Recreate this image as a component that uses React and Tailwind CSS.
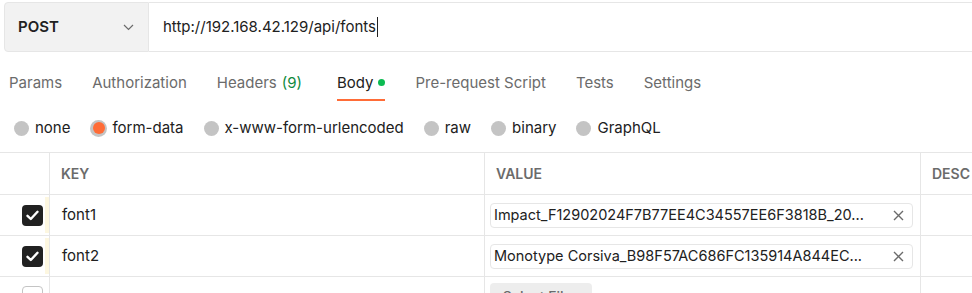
import React from 'react'

const tabs = [
  { label: 'Params' },
  { label: 'Authorization' },
  { label: 'Headers', count: '(9)' },
  { label: 'Body', active: true },
  { label: 'Pre-request Script' },
  { label: 'Tests' },
  { label: 'Settings' },
]

const bodyTypes = ['none', 'form-data', 'x-www-form-urlencoded', 'raw', 'binary', 'GraphQL']

const rows = [
  { key: 'font1', value: 'Impact_F12902024F7B77EE4C34557EE6F3818B_20...' },
  { key: 'font2', value: 'Monotype Corsiva_B98F57AC686FC135914A844EC...' },
]

function Check() {
  return (
    <div className="flex h-[21px] w-[21px] items-center justify-center rounded-[4px] bg-[#212121]">
      <svg width="13" height="11" viewBox="0 0 13 11" fill="none">
        <path d="M1.5 5.8 L4.8 9 L11.5 1.8" stroke="white" strokeWidth="2.4" strokeLinecap="round" strokeLinejoin="round" />
      </svg>
    </div>
  )
}

function Cross() {
  return (
    <svg width="11" height="11" viewBox="0 0 11 11" fill="none">
      <path d="M1 1 L10 10 M10 1 L1 10" stroke="#6b6b6b" strokeWidth="1.4" />
    </svg>
  )
}

export default function App() {
  return (
    <div className="h-[293px] w-[972px] overflow-hidden bg-white font-['Inter',sans-serif] text-[#212121]">
      {/* request bar */}
      <div className="flex h-[52px] pl-[4px] pt-[2px]">
        <div className="flex w-[145px] items-center justify-between rounded-l-[4px] border border-[#e6e6e6] bg-[#f2f2f2] pl-[13px] pr-[14px]">
          <span className="text-[15px] font-semibold">POST</span>
          <svg width="11" height="7" viewBox="0 0 11 7" fill="none">
            <path d="M1 1 L5.5 5.5 L10 1" stroke="#6b6b6b" strokeWidth="1.2" />
          </svg>
        </div>
        <div className="flex flex-1 items-center border-y border-[#e6e6e6] pl-[14px]">
          <span className="text-[15px]">http://192.168.42.129/api/fonts</span>
          <span className="ml-px h-[20px] w-px bg-[#212121]" />
        </div>
      </div>

      {/* tabs */}
      <div className="flex h-[49px] items-end gap-[30px] pl-[9px]">
        {tabs.map((t) => (
          <div
            key={t.label}
            className={`flex items-center border-b-2 pb-[6px] text-[15px] leading-[21px] ${
              t.active ? 'border-[#ff6c37] text-[#212121]' : 'border-transparent text-[#6b6b6b]'
            } ${t.count ? 'mr-[5px]' : ''}`}
          >
            {t.label}
            {t.count && <span className="ml-[5px] text-[#0f8a3d]">{t.count}</span>}
            {t.active && <span className="ml-[5px] h-[7px] w-[7px] rounded-full bg-[#0cbb52]" />}
          </div>
        ))}
      </div>

      {/* body types */}
      <div className="flex h-[51px] items-center gap-[20px] pl-[14px] pt-[3px]">
        {bodyTypes.map((b) =>
          b === 'form-data' ? (
            <div key={b} className="flex items-center gap-[5px] text-[15px]">
              <span className="flex h-[17px] w-[17px] items-center justify-center rounded-full bg-[#c4c4c4]">
                <span className="h-[12px] w-[12px] rounded-full bg-[#ff6c37]" />
              </span>
              {b}
            </div>
          ) : (
            <div key={b} className="flex items-center gap-[6px] text-[15px]">
              <span className="h-[15px] w-[15px] rounded-full bg-[#c4c4c4]" />
              {b}
            </div>
          )
        )}
      </div>

      {/* table */}
      <div className="border-t border-[#e6e6e6]">
        <div className="grid h-[42px] grid-cols-[50px_435px_436px_1fr] border-b border-[#e6e6e6] text-[14px] font-semibold text-[#6b6b6b]">
          <div className="border-r border-[#e6e6e6]" />
          <div className="flex items-center border-r border-[#e6e6e6] pl-[11px]">KEY</div>
          <div className="flex items-center border-r border-[#e6e6e6] pl-[11px]">VALUE</div>
          <div className="flex items-center pl-[11px]">DESC</div>
        </div>
        {rows.map((r) => (
          <div key={r.key} className="grid h-[41px] grid-cols-[50px_435px_436px_1fr] border-b border-[#e6e6e6] text-[15px]">
            <div className="flex items-center border-r border-[#e6e6e6] pl-[22px]">
              <Check />
              <span className="ml-[2px] h-[36px] w-[4px] bg-[#fdf7e0]" />
            </div>
            <div className="flex items-center border-r border-[#e6e6e6] pl-[12px]">{r.key}</div>
            <div className="flex items-center border-r border-[#e6e6e6] pl-[5px] pr-[7px]">
              <div className="flex h-[25px] flex-1 items-center justify-between rounded-[4px] border border-[#e6e6e6] pl-[3px] pr-[8px] text-[14.5px]">
                <span>{r.value}</span>
                <Cross />
              </div>
            </div>
            <div />
          </div>
        ))}
        <div className="grid h-[41px] grid-cols-[50px_435px_436px_1fr]">
          <div className="border-r border-[#e6e6e6] pl-[22px] pt-[9px]">
            <div className="h-[21px] w-[21px] rounded-[4px] border border-[#c4c4c4]" />
          </div>
          <div className="border-r border-[#e6e6e6]" />
          <div className="border-r border-[#e6e6e6] pl-[5px] pt-[6px]">
            <div className="flex h-[26px] w-[102px] items-start justify-center rounded-[4px] bg-[#ededed] pt-[5px] text-[14px] font-medium leading-[17px] text-[#6b6b6b]">
              Select Files
            </div>
          </div>
          <div />
        </div>
      </div>
    </div>
  )
}
